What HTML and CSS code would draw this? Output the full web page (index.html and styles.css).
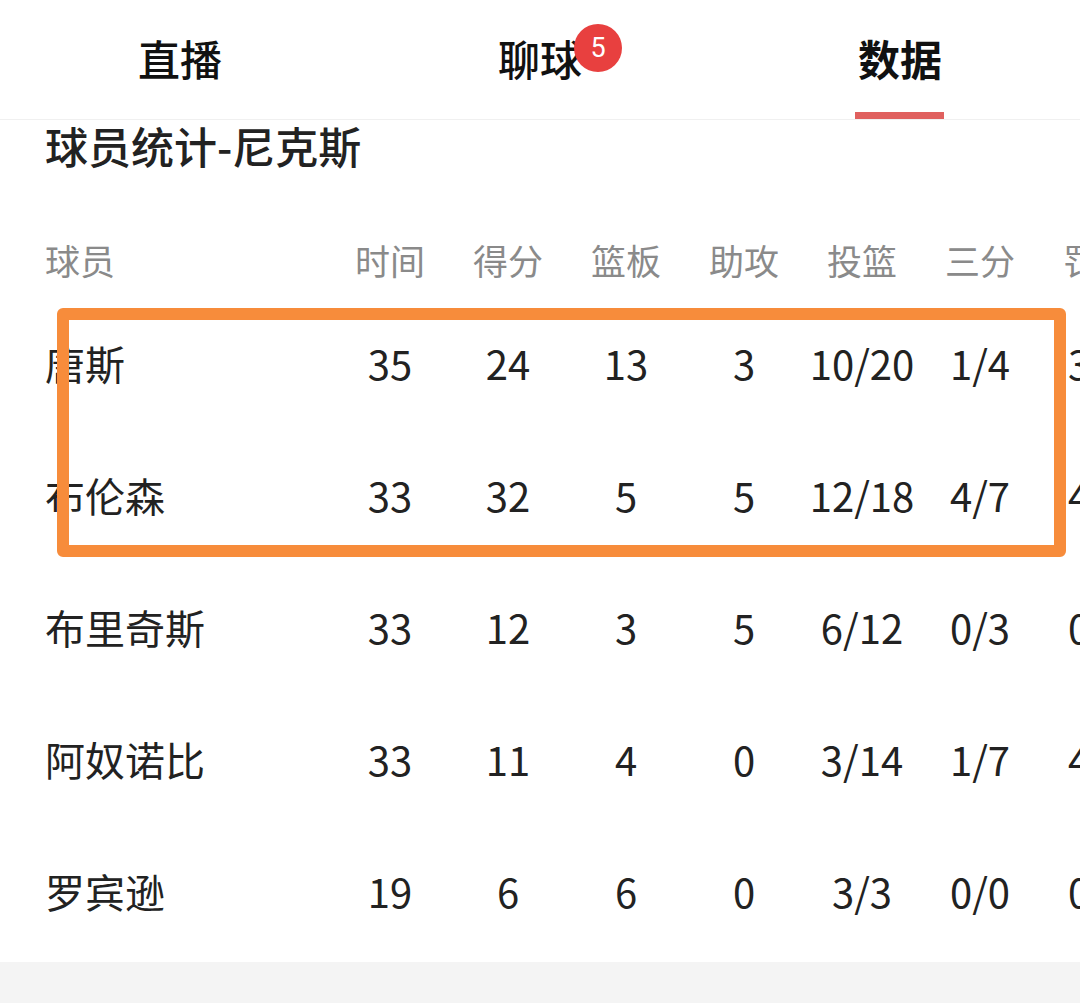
FILE: index.html
```html
<!DOCTYPE html>
<html lang="zh-CN">
<head>
<meta charset="utf-8">
<link rel="stylesheet" href="styles.css">
</head>
<body>
<div class="page">
  <nav class="tabs">
    <div class="tab"><span class="label">直播</span></div>
    <div class="tab"><span class="label">聊球<span class="badge">5</span></span></div>
    <div class="tab active"><span class="label">数据</span><span class="bar"></span></div>
  </nav>
  <h2 class="title">球员统计-尼克斯</h2>
  <div class="table">
    <div class="row head">
      <div class="name">球员</div><div>时间</div><div>得分</div><div>篮板</div><div>助攻</div><div>投篮</div><div>三分</div><div>罚球</div>
    </div>
    <div class="row">
      <div class="name">唐斯</div><div>35</div><div>24</div><div>13</div><div>3</div><div>10/20</div><div>1/4</div><div>3/4</div>
    </div>
    <div class="row">
      <div class="name">布伦森</div><div>33</div><div>32</div><div>5</div><div>5</div><div>12/18</div><div>4/7</div><div>4/4</div>
    </div>
    <div class="row">
      <div class="name">布里奇斯</div><div>33</div><div>12</div><div>3</div><div>5</div><div>6/12</div><div>0/3</div><div>0/0</div>
    </div>
    <div class="row">
      <div class="name">阿奴诺比</div><div>33</div><div>11</div><div>4</div><div>0</div><div>3/14</div><div>1/7</div><div>4/4</div>
    </div>
    <div class="row">
      <div class="name">罗宾逊</div><div>19</div><div>6</div><div>6</div><div>0</div><div>3/3</div><div>0/0</div><div>0/0</div>
    </div>
  </div>
  <div class="footer"></div>
  <div class="highlight"></div>
</div>
</body>
</html>
```

FILE: styles.css
```css
html, body {
  margin: 0;
  padding: 0;
  background: #ffffff;
}
body {
  font-family: "Noto Sans CJK SC", "Noto Sans", sans-serif;
  color: #222222;
}
.page {
  position: relative;
  width: 1080px;
  height: 1003px;
  overflow: hidden;
}
.tabs {
  display: grid;
  grid-template-columns: repeat(3, 1fr);
  height: 119px;
  border-bottom: 1px solid #f0f0f0;
}
.tab {
  position: relative;
  display: flex;
  justify-content: center;
  align-items: center;
  font-size: 42px;
  font-weight: 500;
  color: #111111;
}
.tab.active .label {
  font-weight: 700;
}
.label {
  position: relative;
  line-height: 60px;
  margin-top: -4px;
}
.badge {
  position: absolute;
  left: 76px;
  top: -4px;
  width: 48px;
  height: 48px;
  border-radius: 50%;
  background: #e8403f;
  color: #ffffff;
  font-family: "Roboto", "Noto Sans", sans-serif;
  font-size: 27px;
  font-weight: 400;
  line-height: 48px;
  text-align: center;
}
.bar {
  position: absolute;
  bottom: 0;
  left: 50%;
  margin-left: -45px;
  width: 89px;
  height: 7px;
  background: #e0605e;
}
.title {
  margin: 0;
  padding-left: 45px;
  height: 56px;
  line-height: 50px;
  font-size: 43px;
  font-weight: 500;
  color: #222222;
}
.table {
  margin-top: 45px;
}
.row {
  display: grid;
  grid-template-columns: 286px repeat(7, 118px);
  padding-left: 45px;
  height: 132px;
  align-items: center;
  font-size: 40px;
  white-space: nowrap;
}
.row > div {
  text-align: center;
}
.row > .name {
  text-align: left;
}
.row.head {
  height: 76px;
  font-size: 35px;
  color: #8a8a8a;
}
.footer {
  margin-top: 5px;
  height: 43px;
  background: #f4f4f4;
}
.highlight {
  position: absolute;
  left: 57px;
  top: 308px;
  width: 985px;
  height: 225px;
  border: 12px solid #f78c3b;
  border-radius: 6px;
}
```
